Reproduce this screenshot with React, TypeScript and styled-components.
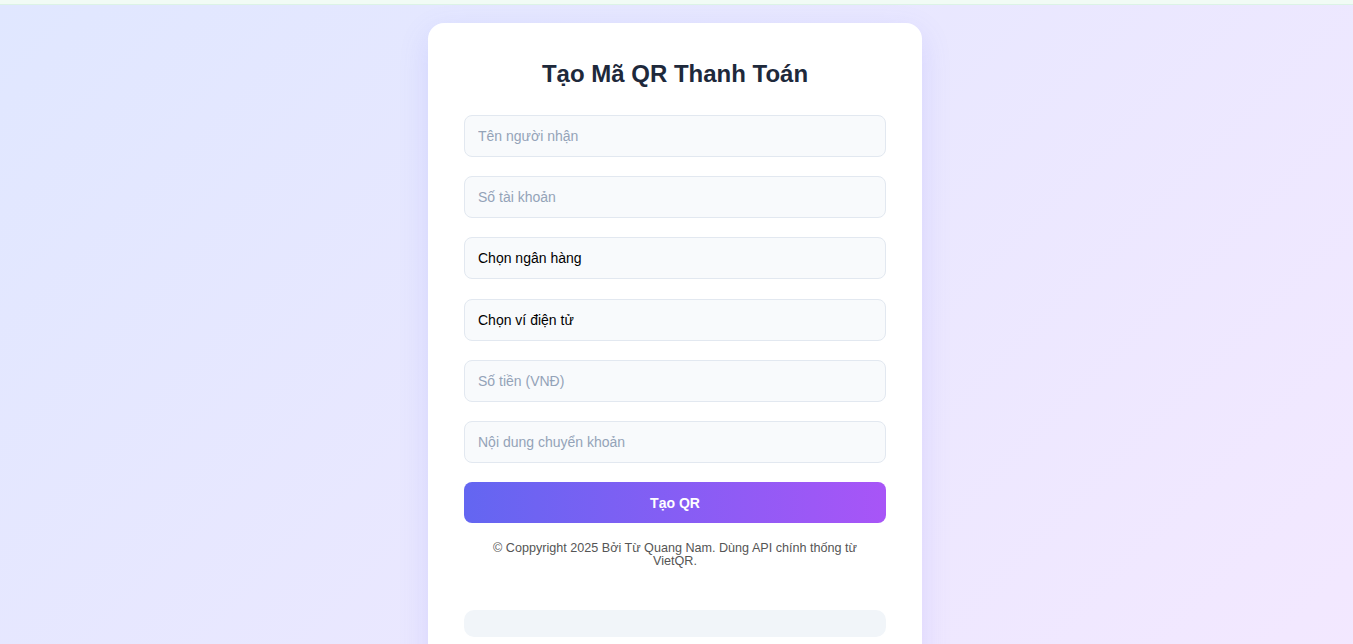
import React from "react";
import styled, { createGlobalStyle } from "styled-components";

const Global = createGlobalStyle`
  html, body { margin: 0; padding: 0; }
  body {
    font-family: "Liberation Sans", Arial, sans-serif;
    min-height: 100vh;
    background: linear-gradient(135deg, #e0e7ff 0%, #f3e8ff 100%);
    overflow: hidden;
  }
  * { box-sizing: border-box; }
`;

const TopStrip = styled.div`
  height: 5px;
  background: #f1fbf5;
  border-bottom: 1px solid #dcf3e6;
`;

const Page = styled.main`
  display: flex;
  justify-content: center;
  padding-top: 18px;
  padding-right: 3px;
`;

const Card = styled.section`
  width: 494px;
  background: #ffffff;
  border-radius: 16px;
  padding: 36px 36px 40px;
  box-shadow: 0 10px 30px rgba(99, 102, 241, 0.15);
  display: flex;
  flex-direction: column;
`;

const Title = styled.h1`
  margin: 0 0 26px;
  text-align: center;
  font-size: 24px;
  line-height: 30px;
  font-weight: 700;
  color: #1e293b;
`;

const Form = styled.form`
  display: flex;
  flex-direction: column;
  gap: 19.2px;
`;

const fieldCss = `
  width: 100%;
  height: 42px;
  padding: 0 13px;
  background: #f8fafc;
  border: 1px solid #e2e8f0;
  border-radius: 8px;
  font-family: "Liberation Sans", Arial, sans-serif;
  font-size: 14px;
  outline: none;
`;

const Input = styled.input`
  ${fieldCss}
  color: #1e293b;
  &::placeholder { color: #94a3b8; }
`;

const Select = styled.select`
  ${fieldCss}
  color: #000000;
  appearance: none;
  -webkit-appearance: none;
`;

const Button = styled.button`
  height: 41px;
  border: none;
  border-radius: 8px;
  background: linear-gradient(90deg, #6366f1 0%, #a855f7 100%);
  color: #ffffff;
  font-family: "Liberation Sans", Arial, sans-serif;
  font-size: 14px;
  font-weight: 700;
  cursor: pointer;
`;

const Copyright = styled.p`
  margin: 19px 0 0;
  padding: 0 20px;
  text-align: center;
  font-size: 12.6px;
  line-height: 13px;
  color: #555555;
`;

const ResultBox = styled.div`
  margin-top: 42px;
  height: 27px;
  background: #f1f5f9;
  border-radius: 10px;
`;

export default function App() {
  return (
    <>
      <Global />
      <TopStrip />
      <Page>
        <Card>
          <Title>Tạo Mã QR Thanh Toán</Title>
          <Form onSubmit={(e) => e.preventDefault()}>
            <Input placeholder="Tên người nhận" />
            <Input placeholder="Số tài khoản" />
            <Select defaultValue="">
              <option value="">Chọn ngân hàng</option>
            </Select>
            <Select defaultValue="">
              <option value="">Chọn ví điện tử</option>
            </Select>
            <Input placeholder="Số tiền (VNĐ)" />
            <Input placeholder="Nội dung chuyển khoản" />
            <Button type="submit">Tạo QR</Button>
          </Form>
          <Copyright>
            © Coppyright 2025 Bởi Từ Quang Nam. Dùng API chính thống từ VietQR.
          </Copyright>
          <ResultBox />
        </Card>
      </Page>
    </>
  );
}
